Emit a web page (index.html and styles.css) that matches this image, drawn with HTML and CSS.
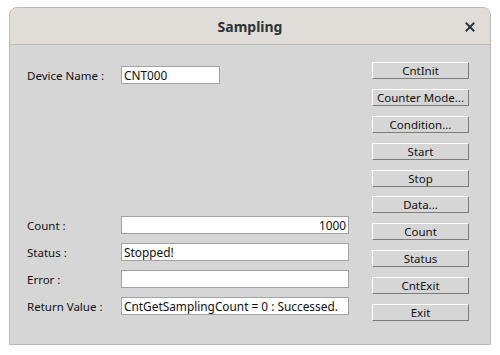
FILE: index.html
```html
<!DOCTYPE html>
<html>
<head>
<meta charset="utf-8">
<link rel="stylesheet" href="styles.css">
</head>
<body>
<div class="window">
  <div class="titlebar">
    <span class="title">Sampling</span>
    <span class="close"><svg width="10" height="10" viewBox="0 0 10 10"><path d="M1.5 1.5 L8.5 8.5 M8.5 1.5 L1.5 8.5" stroke="#2e3436" stroke-width="2" stroke-linecap="square"/></svg></span>
  </div>
  <div class="content">
    <div class="fields">
      <div class="row device">
        <span class="label">Device Name :</span>
        <div class="input short">CNT000</div>
      </div>
      <div class="group">
        <div class="row">
          <span class="label">Count :</span>
          <div class="input long right">1000</div>
        </div>
        <div class="row">
          <span class="label">Status :</span>
          <div class="input long">Stopped!</div>
        </div>
        <div class="row">
          <span class="label">Error :</span>
          <div class="input long"></div>
        </div>
        <div class="row">
          <span class="label">Return Value :</span>
          <div class="input long">CntGetSamplingCount = 0 : Successed.</div>
        </div>
      </div>
    </div>
    <div class="buttons">
      <div class="btn">CntInit</div>
      <div class="btn">Counter Mode...</div>
      <div class="btn">Condition...</div>
      <div class="btn">Start</div>
      <div class="btn">Stop</div>
      <div class="btn">Data...</div>
      <div class="btn">Count</div>
      <div class="btn">Status</div>
      <div class="btn">CntExit</div>
      <div class="btn">Exit</div>
    </div>
  </div>
</div>
</body>
</html>
```
FILE: styles.css
```css
html, body {
  margin: 0;
  padding: 0;
  background: #ffffff;
}
body {
  font-family: "Noto Sans", "DejaVu Sans", sans-serif;
  font-size: 11.5px;
  color: #111111;
}
.window {
  margin: 7px 0 0 9px;
  width: 480px;
  height: 336px;
  border: 1px solid #bdbab6;
  border-radius: 8px 8px 0 0;
  background: #d6d6d6;
  overflow: hidden;
}
.titlebar {
  position: relative;
  height: 36px;
  background: #e0ddd9;
  border-bottom: 1px solid #bfbcb7;
  display: flex;
  align-items: center;
  justify-content: center;
}
.title {
  font-weight: bold;
  font-size: 14px;
  color: #2e3436;
}
.close {
  position: absolute;
  right: 15px;
  top: 14px;
  width: 10px;
  height: 10px;
  display: flex;
}
.content {
  display: flex;
  padding: 17px 0 0 17px;
}
.fields {
  width: 323px;
  display: flex;
  flex-direction: column;
  padding-top: 4px;
}
.row {
  display: flex;
  align-items: center;
  height: 18px;
}
.label {
  width: 94px;
  flex: none;
}
.input {
  box-sizing: border-box;
  height: 18px;
  border: 1px solid #a3a3a3;
  background: #ffffff;
  padding: 0 2px;
  font-size: 11.85px;
  line-height: 16px;
  white-space: nowrap;
  overflow: hidden;
}
.short {
  width: 99px;
}
.long {
  width: 228px;
}
.right {
  text-align: right;
}
.group {
  margin-top: 132px;
  display: flex;
  flex-direction: column;
  gap: 9px;
}
.buttons {
  margin-left: 22px;
  display: flex;
  flex-direction: column;
  gap: 9.9px;
}
.btn {
  box-sizing: border-box;
  width: 97px;
  height: 17px;
  border: 1px solid;
  border-color: #ffffff #7c7c7c #7c7c7c #ffffff;
  background: #d6d6d6;
  text-align: center;
  line-height: 15px;
  white-space: nowrap;
}
```
